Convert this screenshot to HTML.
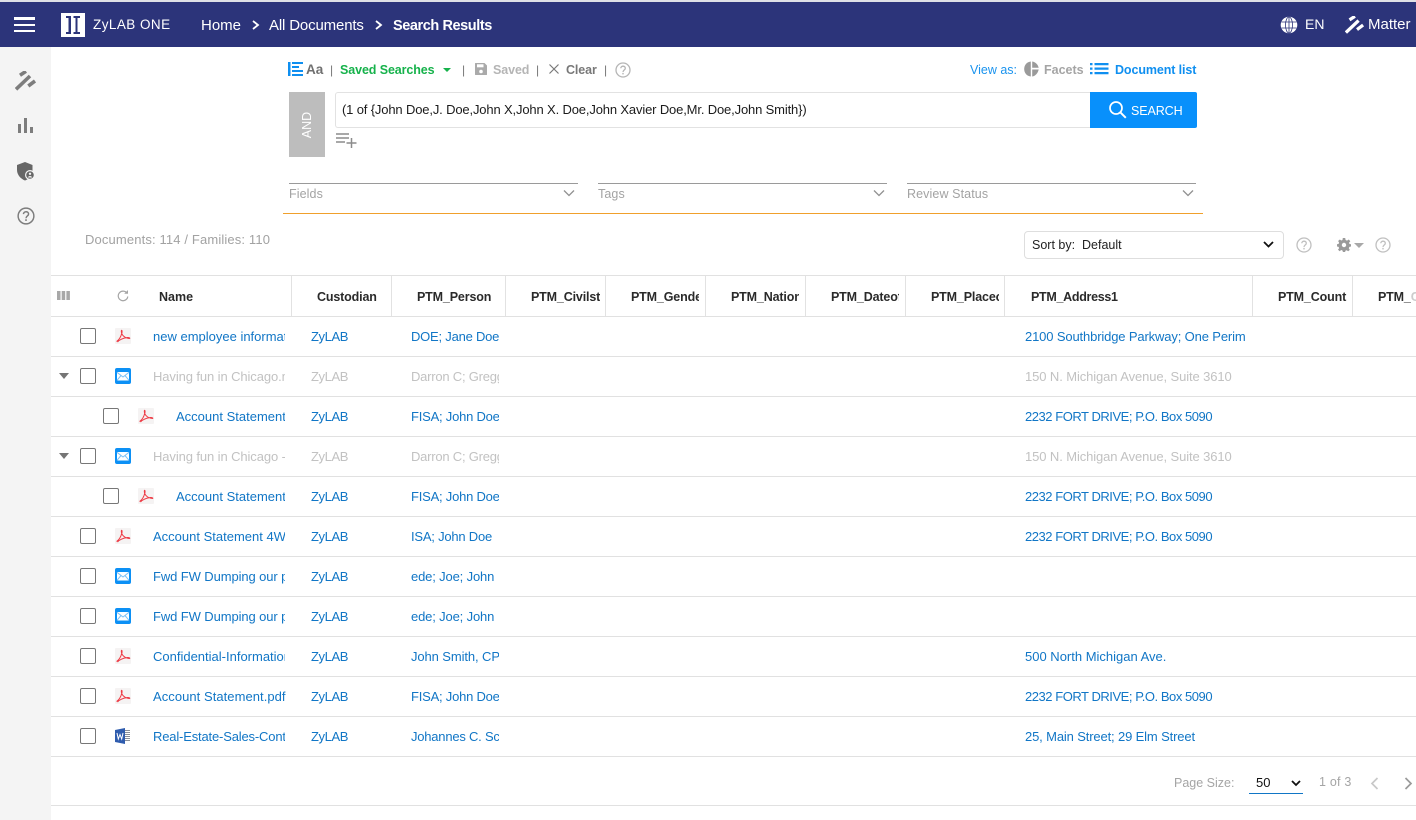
<!DOCTYPE html>
<html lang="en">
<head>
<meta charset="utf-8">
<title>ZyLAB ONE - Search Results</title>
<style>
html,body{margin:0;padding:0;width:1416px;height:820px;overflow:hidden;background:#fff;font-family:"Liberation Sans",Arial,sans-serif;}
.a{position:absolute;white-space:nowrap;}
svg{position:absolute;display:block;overflow:visible;}
.t{position:absolute;white-space:nowrap;font-size:13px;line-height:16px;overflow:hidden;color:#1176c6;letter-spacing:-.1px;}
.g{color:#c2c2c2;}
.z{letter-spacing:-.4px;}
.p{letter-spacing:-.22px;}
.f{letter-spacing:-.46px;}
.h{position:absolute;top:289px;font-size:12.5px;line-height:16px;font-weight:bold;color:#2a2a2a;white-space:nowrap;overflow:hidden;letter-spacing:-.15px;}
.v{position:absolute;top:276px;height:40px;width:1px;background:#e2e2e2;}
.l{position:absolute;left:51px;width:1365px;height:1px;background:#e1e1e1;}
.c{position:absolute;width:14px;height:14px;border:1px solid #777;border-radius:2px;background:#fff;}
.tri{position:absolute;width:0;height:0;border-left:5.5px solid transparent;border-right:5.5px solid transparent;border-top:6px solid #757575;}
</style>
</head>
<body>
<svg width="0" height="0" style="position:absolute">
<defs>
<symbol id="pdf" viewBox="0 0 16 16"><rect width="16" height="16" rx="1" fill="#f5f3f3"/><path d="M1.500 13.500C4 12 6 8.500 7 4.500C7.300 2.500 6.500 1.500 6.300 3C6.300 6 8.500 10 14.500 10.500C15.500 10.200 14 9.300 12.500 9.500C9 10 5 11 2.500 14" fill="none" stroke="#ee3b45" stroke-width="1"/></symbol>
<symbol id="mail" viewBox="0 0 16 16"><rect width="16" height="16" rx="2" fill="#0c90f5"/><rect x="2" y="4" width="12" height="8.500" fill="#fff"/><path d="M2 4.300L8 9L14 4.300M2 12.300L6 7.500M14 12.300L10 7.500" fill="none" stroke="#7cc1f7" stroke-width="1"/></symbol>
<symbol id="word" viewBox="0 0 16 16"><path d="M0 2L10 0V16L0 14Z" fill="#2f5cae"/><path d="M2 5L3.300 11L5 6.500L6.700 11L8 5" fill="none" stroke="#fff" stroke-width="1"/><path d="M10 2.500H15M10 4.500H15M10 6.500H15M10 8.500H15M10 10.500H15M10 12.500H15" stroke="#8a8f99" stroke-width="1"/></symbol>
<symbol id="gavel" viewBox="0 0 21 21"><path d="M5 4.300L11 0.300M1 18.300L15 5M13.300 15L20 10" fill="none" stroke="currentColor" stroke-width="3.600"/></symbol>
<symbol id="q" viewBox="0 0 16 16"><circle cx="8" cy="8" r="7" fill="none" stroke="currentColor" stroke-width="1.300"/><path d="M5.800 6.300C5.800 3.500 10.300 3.500 10.300 6.200C10.300 8 8 8 8 10" fill="none" stroke="currentColor" stroke-width="1.300"/><rect x="7.300" y="10.900" width="1.400" height="1.500" fill="currentColor"/></symbol>
<symbol id="chev" viewBox="0 0 12 8"><path d="M1 1.500L6 6.500L11 1.500" fill="none" stroke="currentColor" stroke-width="1.300"/></symbol>
</defs>
</svg>

<!-- top band + header -->
<div class="a" style="left:0;top:0;width:1416px;height:2px;background:#dfe0e6"></div>
<div class="a" style="left:0;top:2px;width:1416px;height:45px;background:#2c347a"></div>
<div class="a" style="left:14px;top:17px;width:21px;height:2.500px;background:#fff"></div>
<div class="a" style="left:14px;top:23.500px;width:21px;height:2.500px;background:#fff"></div>
<div class="a" style="left:14px;top:29.500px;width:21px;height:2.500px;background:#fff"></div>
<!-- logo -->
<div class="a" style="left:61px;top:13px;width:24px;height:24px;background:#fff"></div>
<svg style="left:61px;top:13px" width="24" height="24" viewBox="0 0 24 24"><path d="M5 3H10V21H5V19H7.500V5H5ZM12.500 3H19V5H16.500V19H19V21H12.500V19H14.500V5H12.500Z" fill="#2c347a"/></svg>
<div class="a" style="left:93px;top:16px;font-size:13.500px;line-height:18px;color:#fff;letter-spacing:.45px;">ZyLAB ONE</div>
<div class="a" style="left:201px;top:17px;font-size:15px;line-height:18px;color:#fff;">Home</div>
<svg style="left:251px;top:20px" width="9" height="10" viewBox="0 0 9 10"><path d="M2 1L7 5L2 9" fill="none" stroke="#fff" stroke-width="1.800"/></svg>
<div class="a" style="left:269px;top:17px;font-size:15px;line-height:18px;color:#fff;letter-spacing:-.15px;">All Documents</div>
<svg style="left:374px;top:20px" width="9" height="10" viewBox="0 0 9 10"><path d="M2 1L7 5L2 9" fill="none" stroke="#fff" stroke-width="1.800"/></svg>
<div class="a" style="left:393px;top:17px;font-size:14.500px;line-height:18px;color:#fff;font-weight:bold;letter-spacing:-.42px;">Search Results</div>
<svg style="left:1280px;top:16px" width="18" height="18" viewBox="0 0 18 18"><circle cx="9" cy="9" r="8.300" fill="#fff"/><g fill="none" stroke="#2c347a" stroke-width=".8"><ellipse cx="9" cy="9" rx="3.500" ry="8"/><path d="M9 1V17M1.500 6H16.500M1.500 12H16.500"/></g></svg>
<div class="a" style="left:1305px;top:15px;font-size:14px;line-height:18px;color:#fff;">EN</div>
<svg style="left:1345px;top:16px;color:#fff" width="19" height="19"><use href="#gavel" width="19" height="19"/></svg>
<div class="a" style="left:1368px;top:16px;font-size:15px;line-height:18px;color:#fff;">Matter</div>

<!-- sidebar -->
<div class="a" style="left:0;top:47px;width:51px;height:773px;background:#f4f4f4"></div>
<svg style="left:15px;top:71px;color:#7d7d7d" width="21" height="21"><use href="#gavel" width="21" height="21"/></svg>
<svg style="left:17px;top:117px" width="17" height="17" viewBox="0 0 17 17"><path d="M1 7H4V16H1ZM7 1H10V16H7ZM13 10H16V16H13Z" fill="#7d7d7d"/></svg>
<svg style="left:15px;top:161px" width="21" height="20" viewBox="0 0 21 20"><path d="M10 1L17.500 4V10C17.500 14 14 18 10 19.500C6 18 2 14 2 9V4Z" fill="#666"/><circle cx="15" cy="14" r="5" fill="#f4f4f4"/><circle cx="15" cy="14" r="3.800" fill="#666"/><circle cx="15" cy="12.800" r="1.200" fill="#f4f4f4"/><path d="M12.800 16.500C13.500 14.500 16.500 14.500 17.200 16.500Z" fill="#f4f4f4"/></svg>
<svg style="left:17px;top:207px;color:#7d7d7d" width="18" height="18"><use href="#q" width="18" height="18"/></svg>

<!-- search toolbar -->
<svg style="left:288px;top:62px" width="15" height="14" viewBox="0 0 15 14"><path d="M0 0H2.500V14H0ZM4 0H15V2H4ZM4 4H11V6H4ZM4 8H15V10H4ZM4 12H15V14H4Z" fill="#0f8ff0"/></svg>
<div class="a" style="left:306px;top:62px;font-size:13.500px;line-height:16px;font-weight:bold;color:#707070;">Aa</div>
<div class="a" style="left:330px;top:62px;font-size:12px;line-height:16px;color:#777;">|</div>
<div class="a" style="left:340px;top:62px;font-size:12.500px;line-height:16px;font-weight:bold;color:#16b24b;letter-spacing:-.1px;">Saved Searches</div>
<div class="tri" style="left:443px;top:67.500px;border-left-width:4px;border-right-width:4px;border-top:4px solid #16b24b"></div>
<div class="a" style="left:462px;top:62px;font-size:12px;line-height:16px;color:#777;">|</div>
<svg style="left:474px;top:62px" width="14" height="14" viewBox="0 0 14 14"><path d="M1.500 1H10.500L13 3.500V12.500Q13 13 12.500 13H1.500Q1 13 1 12.500V1.500Q1 1 1.500 1Z" fill="#aaa"/><rect x="3" y="2.300" width="6.500" height="3" fill="#fff"/><circle cx="7" cy="9.500" r="1.800" fill="#fff"/></svg>
<div class="a" style="left:493px;top:62px;font-size:12.500px;line-height:16px;font-weight:bold;color:#b5b5b5;letter-spacing:-.1px;">Saved</div>
<div class="a" style="left:536px;top:62px;font-size:12px;line-height:16px;color:#777;">|</div>
<svg style="left:548px;top:63px" width="12" height="12" viewBox="0 0 12 12"><path d="M1.500 1.500L10.500 10.500M10.500 1.500L1.500 10.500" stroke="#7a7a7a" stroke-width="1.200"/></svg>
<div class="a" style="left:566px;top:62px;font-size:12.500px;line-height:16px;font-weight:bold;color:#787878;letter-spacing:-.1px;">Clear</div>
<div class="a" style="left:604px;top:62px;font-size:12px;line-height:16px;color:#777;">|</div>
<svg style="left:615px;top:62px;color:#b5b5b5" width="16" height="16"><use href="#q" width="16" height="16"/></svg>

<div class="a" style="left:970px;top:62px;font-size:12.500px;line-height:16px;color:#1a93ee;">View as:</div>
<svg style="left:1024px;top:61px" width="15" height="16" viewBox="0 0 15 16"><path d="M6.800 0.500V15.500C-2 14.500 -2 1.500 6.800 0.500ZM8.200 0.500C11.500 1 14 3.500 14.700 6.800H8.200ZM8.200 8.500H14.700C14 12 11.500 15 8.200 15.500Z" fill="#9a9a9a"/></svg>
<div class="a" style="left:1044px;top:62px;font-size:12.500px;line-height:16px;font-weight:bold;color:#a5a5a5;">Facets</div>
<svg style="left:1090px;top:63px" width="19" height="12" viewBox="0 0 19 12"><path d="M0 0H2.500V2.200H0ZM4.500 0H18.500V2.200H4.500ZM0 4.500H2.500V6.700H0ZM4.500 4.500H18.500V6.700H4.500ZM0 9H2.500V11.200H0ZM4.500 9H18.500V11.200H4.500Z" fill="#0f8ff0"/></svg>
<div class="a" style="left:1115px;top:62px;font-size:12.500px;line-height:16px;font-weight:bold;color:#0f8ff0;letter-spacing:-.1px;">Document list</div>

<!-- search box -->
<div class="a" style="left:289px;top:92px;width:36px;height:65px;background:#bdbdbd"></div>
<div class="a" style="left:289px;top:92px;width:36px;height:65px;display:flex;align-items:center;justify-content:center;"><span style="font-size:12.500px;color:#fff;transform:rotate(-90deg);display:block;">AND</span></div>
<div class="a" style="left:335px;top:92px;width:755px;height:34px;border:1px solid #e2e2e2;border-right:0;border-radius:3px 0 0 3px;background:#fff"></div>
<div class="a" style="left:342px;top:101px;font-size:13px;line-height:17px;color:#1b1b1b;letter-spacing:-.15px;">(1 of {John Doe,J. Doe,John X,John X. Doe,John Xavier Doe,Mr. Doe,John Smith})</div>
<div class="a" style="left:1090px;top:92px;width:107px;height:36px;background:#0890fb;border-radius:0 2px 2px 0"></div>
<svg style="left:1108px;top:100px" width="19" height="19" viewBox="0 0 19 19"><circle cx="8" cy="8" r="6" fill="none" stroke="#fff" stroke-width="1.700"/><path d="M12.300 12.300L17.800 17.800" stroke="#fff" stroke-width="2"/></svg>
<div class="a" style="left:1131px;top:103px;font-size:12.500px;line-height:17px;color:#fff;letter-spacing:-.1px;">SEARCH</div>
<svg style="left:336px;top:133px" width="21" height="15" viewBox="0 0 21 15"><path d="M0 1H13M0 5H13M0 9H9M15.500 5V15M10.500 10H20.500" stroke="#8c8c8c" stroke-width="1.500" fill="none"/></svg>

<!-- filters -->
<div class="a" style="left:289px;top:183px;width:289px;height:1px;background:#9a9a9a"></div>
<div class="a" style="left:598px;top:183px;width:289px;height:1px;background:#9a9a9a"></div>
<div class="a" style="left:907px;top:183px;width:289px;height:1px;background:#9a9a9a"></div>
<div class="a" style="left:289px;top:186px;font-size:12.500px;line-height:16px;color:#a3a3a3;letter-spacing:.1px;">Fields</div>
<div class="a" style="left:598px;top:186px;font-size:12.500px;line-height:16px;color:#a3a3a3;letter-spacing:.1px;">Tags</div>
<div class="a" style="left:907px;top:186px;font-size:12.500px;line-height:16px;color:#a3a3a3;letter-spacing:.1px;">Review Status</div>
<svg style="left:563px;top:189px;color:#909090" width="12" height="8"><use href="#chev" width="12" height="8"/></svg>
<svg style="left:873px;top:189px;color:#909090" width="12" height="8"><use href="#chev" width="12" height="8"/></svg>
<svg style="left:1182px;top:189px;color:#909090" width="12" height="8"><use href="#chev" width="12" height="8"/></svg>
<div class="a" style="left:283px;top:213px;width:920px;height:1px;background:#f0a02c"></div>

<!-- summary + sort -->
<div class="a" style="left:85px;top:232px;font-size:13px;line-height:16px;color:#a2a2a2;letter-spacing:.14px;">Documents: 114 / Families: 110</div>
<div class="a" style="left:1024px;top:231px;width:258px;height:26px;border:1px solid #dedede;border-radius:4px;background:#fff"></div>
<div class="a" style="left:1032px;top:237px;font-size:12.500px;line-height:16px;color:#222;">Sort by:&nbsp; Default</div>
<svg style="left:1263px;top:241px" width="11" height="7" viewBox="0 0 11 7"><path d="M1 1L5.500 5.500L10 1" fill="none" stroke="#111" stroke-width="1.800"/></svg>
<svg style="left:1296px;top:237px;color:#c0c0c0" width="16" height="16"><use href="#q" width="16" height="16"/></svg>
<svg style="left:1337px;top:238px" width="14" height="14" viewBox="0 0 14 14"><path d="M5.800 0H8.200L8.600 2L10 2.600L11.800 1.500L13.300 3.200L12 4.800L12.500 6L14 6.300V8.500L12.400 8.900L11.800 10.300L12.800 11.900L11.200 13.300L9.700 12.200L8.500 12.600L8.100 14H5.900L5.500 12.500L4.200 12L2.600 13.200L1 11.600L2.100 10.200L1.600 8.900L0 8.500V6.200L1.600 5.900L2.100 4.600L1.100 3L2.800 1.500L4.300 2.500L5.500 2Z" fill="#9a9a9a"/><circle cx="7" cy="7" r="2.200" fill="#fff"/></svg>
<div class="tri" style="left:1354px;top:243px;border-left-width:5px;border-right-width:5px;border-top:5px solid #a8a8a8"></div>
<svg style="left:1375px;top:237px;color:#c0c0c0" width="16" height="16"><use href="#q" width="16" height="16"/></svg>

<!-- table header -->
<div class="l" style="top:275px"></div>
<div class="v" style="left:291px"></div><div class="v" style="left:391px"></div><div class="v" style="left:505px"></div><div class="v" style="left:605px"></div><div class="v" style="left:705px"></div><div class="v" style="left:805px"></div><div class="v" style="left:905px"></div><div class="v" style="left:1004px"></div><div class="v" style="left:1252px"></div><div class="v" style="left:1352px"></div>
<svg style="left:57px;top:291px" width="13" height="9" viewBox="0 0 13 9"><path d="M0 0H3.500V9H0ZM4.700 0H8.200V9H4.700ZM9.400 0H12.900V9H9.400Z" fill="#a8a8a8"/></svg>
<svg style="left:117px;top:290px" width="12" height="12" viewBox="0 0 12 12"><path d="M10 3.200A4.800 4.800 0 1 0 10.800 6.500" fill="none" stroke="#a5a5a5" stroke-width="1.200"/><path d="M7.200 3.700H11V0Z" fill="#a5a5a5"/></svg>
<div class="h" style="left:159px;width:120px;letter-spacing:0">Name</div>
<div class="h" style="left:317px;width:70px">Custodian</div>
<div class="h" style="left:417px;width:84px">PTM_Person</div>
<div class="h" style="left:531px;width:69px">PTM_Civilstatus</div>
<div class="h" style="left:631px;width:68px">PTM_Gender</div>
<div class="h" style="left:731px;width:68px">PTM_Nationality</div>
<div class="h" style="left:831px;width:68px">PTM_Dateofbirth</div>
<div class="h" style="left:931px;width:68px">PTM_Placeofbirth</div>
<div class="h" style="left:1031px;width:200px;letter-spacing:-.3px">PTM_Address1</div>
<div class="h" style="left:1278px;width:69px">PTM_Country</div>
<div class="h" style="left:1378px;width:38px">PTM_<span style="color:#ccc">City</span></div>
<div class="l" style="top:316px;height:1px"></div>

<!-- row 1 -->
<div class="c" style="left:80px;top:328px"></div>
<svg style="left:115px;top:328px" width="16" height="16"><use href="#pdf" width="16" height="16"/></svg>
<div class="t" style="left:153px;top:329px;width:132px;letter-spacing:0">new employee information.pdf</div>
<div class="t z" style="left:311px;top:329px">ZyLAB</div>
<div class="t p" style="left:411px;top:329px;width:88px">DOE; Jane Doe; John</div>
<div class="t" style="left:1025px;top:329px;width:221px;letter-spacing:-.14px">2100 Southbridge Parkway; One Perimeter</div>
<div class="l" style="top:356px"></div>

<!-- row 2 -->
<div class="tri" style="left:59px;top:373px"></div>
<div class="c" style="left:80px;top:368px"></div>
<svg style="left:115px;top:368px" width="16" height="16"><use href="#mail" width="16" height="16"/></svg>
<div class="t g" style="left:153px;top:369px;width:132px">Having fun in Chicago.msg</div>
<div class="t g z" style="left:311px;top:369px">ZyLAB</div>
<div class="t g p" style="left:411px;top:369px;width:88px">Darron C; Gregg; John</div>
<div class="t g" style="left:1025px;top:369px;width:221px">150 N. Michigan Avenue, Suite 3610</div>
<div class="l" style="top:396px"></div>

<!-- row 3 -->
<div class="c" style="left:103px;top:408px"></div>
<svg style="left:138px;top:408px" width="16" height="16"><use href="#pdf" width="16" height="16"/></svg>
<div class="t" style="left:176px;top:409px;width:109px;letter-spacing:0">Account Statement 4W.pdf</div>
<div class="t z" style="left:311px;top:409px">ZyLAB</div>
<div class="t p" style="left:411px;top:409px;width:88px">FISA; John Doe</div>
<div class="t f" style="left:1025px;top:409px;width:221px">2232 FORT DRIVE; P.O. Box 5090</div>
<div class="l" style="top:436px"></div>

<!-- row 4 -->
<div class="tri" style="left:59px;top:453px"></div>
<div class="c" style="left:80px;top:448px"></div>
<svg style="left:115px;top:448px" width="16" height="16"><use href="#mail" width="16" height="16"/></svg>
<div class="t g" style="left:153px;top:449px;width:132px">Having fun in Chicago - Copy</div>
<div class="t g z" style="left:311px;top:449px">ZyLAB</div>
<div class="t g p" style="left:411px;top:449px;width:88px">Darron C; Gregg; John</div>
<div class="t g" style="left:1025px;top:449px;width:221px">150 N. Michigan Avenue, Suite 3610</div>
<div class="l" style="top:476px"></div>

<!-- row 5 -->
<div class="c" style="left:103px;top:488px"></div>
<svg style="left:138px;top:488px" width="16" height="16"><use href="#pdf" width="16" height="16"/></svg>
<div class="t" style="left:176px;top:489px;width:109px;letter-spacing:0">Account Statement 4W.pdf</div>
<div class="t z" style="left:311px;top:489px">ZyLAB</div>
<div class="t p" style="left:411px;top:489px;width:88px">FISA; John Doe</div>
<div class="t f" style="left:1025px;top:489px;width:221px">2232 FORT DRIVE; P.O. Box 5090</div>
<div class="l" style="top:516px"></div>

<!-- row 6 -->
<div class="c" style="left:80px;top:528px"></div>
<svg style="left:115px;top:528px" width="16" height="16"><use href="#pdf" width="16" height="16"/></svg>
<div class="t" style="left:153px;top:529px;width:132px;letter-spacing:0">Account Statement 4W.pdf</div>
<div class="t z" style="left:311px;top:529px">ZyLAB</div>
<div class="t p" style="left:411px;top:529px;width:88px">ISA; John Doe</div>
<div class="t f" style="left:1025px;top:529px;width:221px">2232 FORT DRIVE; P.O. Box 5090</div>
<div class="l" style="top:556px"></div>

<!-- row 7 -->
<div class="c" style="left:80px;top:568px"></div>
<svg style="left:115px;top:568px" width="16" height="16"><use href="#mail" width="16" height="16"/></svg>
<div class="t" style="left:153px;top:569px;width:132px">Fwd FW Dumping our plan</div>
<div class="t z" style="left:311px;top:569px">ZyLAB</div>
<div class="t p" style="left:411px;top:569px;width:88px;letter-spacing:-.15px">ede; Joe; John</div>
<div class="l" style="top:596px"></div>

<!-- row 8 -->
<div class="c" style="left:80px;top:608px"></div>
<svg style="left:115px;top:608px" width="16" height="16"><use href="#mail" width="16" height="16"/></svg>
<div class="t" style="left:153px;top:609px;width:132px">Fwd FW Dumping our plan</div>
<div class="t z" style="left:311px;top:609px">ZyLAB</div>
<div class="t p" style="left:411px;top:609px;width:88px;letter-spacing:-.15px">ede; Joe; John</div>
<div class="l" style="top:636px"></div>

<!-- row 9 -->
<div class="c" style="left:80px;top:648px"></div>
<svg style="left:115px;top:648px" width="16" height="16"><use href="#pdf" width="16" height="16"/></svg>
<div class="t" style="left:153px;top:649px;width:132px;letter-spacing:0">Confidential-Information.pdf</div>
<div class="t z" style="left:311px;top:649px">ZyLAB</div>
<div class="t p" style="left:411px;top:649px;width:88px;letter-spacing:-.1px">John Smith, CPA</div>
<div class="t" style="left:1025px;top:649px;width:221px;letter-spacing:0">500 North Michigan Ave.</div>
<div class="l" style="top:676px"></div>

<!-- row 10 -->
<div class="c" style="left:80px;top:688px"></div>
<svg style="left:115px;top:688px" width="16" height="16"><use href="#pdf" width="16" height="16"/></svg>
<div class="t" style="left:153px;top:689px;width:133px;letter-spacing:.05px">Account Statement.pdf</div>
<div class="t z" style="left:311px;top:689px">ZyLAB</div>
<div class="t p" style="left:411px;top:689px;width:88px">FISA; John Doe</div>
<div class="t f" style="left:1025px;top:689px;width:221px">2232 FORT DRIVE; P.O. Box 5090</div>
<div class="l" style="top:716px"></div>

<!-- row 11 -->
<div class="c" style="left:80px;top:728px"></div>
<svg style="left:115px;top:728px" width="16" height="16"><use href="#word" width="16" height="16"/></svg>
<div class="t" style="left:153px;top:729px;width:132px;letter-spacing:-.17px">Real-Estate-Sales-Contract</div>
<div class="t z" style="left:311px;top:729px">ZyLAB</div>
<div class="t p" style="left:411px;top:729px;width:88px">Johannes C. Schmidt</div>
<div class="t" style="left:1025px;top:729px;width:221px;letter-spacing:-.14px">25, Main Street; 29 Elm Street</div>
<div class="l" style="top:756px"></div>

<!-- pagination -->
<div class="a" style="left:1174px;top:775px;font-size:12.500px;line-height:16px;color:#a5a5a5;">Page Size:</div>
<div class="a" style="left:1256px;top:775px;font-size:13px;line-height:16px;color:#111;">50</div>
<svg style="left:1291px;top:780px" width="10" height="7" viewBox="0 0 10 7"><path d="M1 1L5 5L9 1" fill="none" stroke="#111" stroke-width="1.800"/></svg>
<div class="a" style="left:1249px;top:793px;width:54px;height:1px;background:#1176c6"></div>
<div class="a" style="left:1319px;top:774px;font-size:12.500px;line-height:16px;color:#a5a5a5;letter-spacing:.2px;">1 of 3</div>
<svg style="left:1370px;top:777px" width="9" height="13" viewBox="0 0 9 13"><path d="M7.500 1L2 6.500L7.500 12" fill="none" stroke="#c8c8c8" stroke-width="1.700"/></svg>
<svg style="left:1404px;top:777px" width="9" height="13" viewBox="0 0 9 13"><path d="M1.500 1L7 6.500L1.500 12" fill="none" stroke="#9a9a9a" stroke-width="1.700"/></svg>
<div class="l" style="top:805px"></div>
</body>
</html>
